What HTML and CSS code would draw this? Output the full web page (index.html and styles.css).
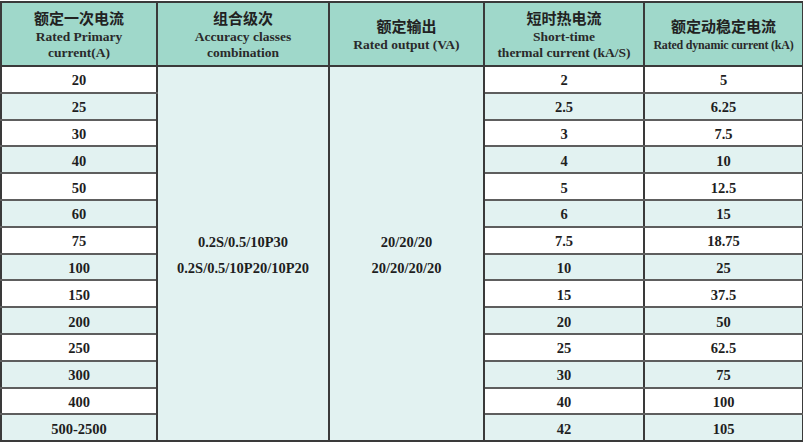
FILE: index.html
```html
<!DOCTYPE html>
<html>
<head>
<meta charset="utf-8">
<link rel="stylesheet" href="styles.css">
</head>
<body>
<table class="spec">
  <colgroup>
    <col class="c1"><col class="c2"><col class="c3"><col class="c4"><col class="c5">
  </colgroup>
  <thead>
    <tr>
      <th><div class="zh">额定一次电流</div><div class="en">Rated Primary<br>current(A)</div></th>
      <th><div class="zh">组合级次</div><div class="en">Accuracy classes<br>combination</div></th>
      <th><div class="zh">额定输出</div><div class="en">Rated output (VA)</div></th>
      <th><div class="zh">短时热电流</div><div class="en">Short-time<br>thermal current (kA/S)</div></th>
      <th><div class="zh">额定动稳定电流</div><div class="en small">Rated dynamic current (kA)</div></th>
    </tr>
  </thead>
  <tbody>
    <tr class="w"><td>20</td><td rowspan="14" class="merged"><div>0.2S/0.5/10P30</div><div>0.2S/0.5/10P20/10P20</div></td><td rowspan="14" class="merged"><div>20/20/20</div><div>20/20/20/20</div></td><td>2</td><td>5</td></tr>
    <tr class="g"><td>25</td><td>2.5</td><td>6.25</td></tr>
    <tr class="w"><td>30</td><td>3</td><td>7.5</td></tr>
    <tr class="g"><td>40</td><td>4</td><td>10</td></tr>
    <tr class="w"><td>50</td><td>5</td><td>12.5</td></tr>
    <tr class="g"><td>60</td><td>6</td><td>15</td></tr>
    <tr class="w"><td>75</td><td>7.5</td><td>18.75</td></tr>
    <tr class="g"><td>100</td><td>10</td><td>25</td></tr>
    <tr class="w"><td>150</td><td>15</td><td>37.5</td></tr>
    <tr class="g"><td>200</td><td>20</td><td>50</td></tr>
    <tr class="w"><td>250</td><td>25</td><td>62.5</td></tr>
    <tr class="g"><td>300</td><td>30</td><td>75</td></tr>
    <tr class="w"><td>400</td><td>40</td><td>100</td></tr>
    <tr class="g"><td>500-2500</td><td>42</td><td>105</td></tr>
  </tbody>
</table>
</body>
</html>
```
FILE: styles.css
```css
html, body {
  margin: 0;
  padding: 0;
  background: #ffffff;
}
.spec {
  border-collapse: collapse;
  table-layout: fixed;
  width: 802px;
  margin-top: 1px;
  font-family: "Liberation Serif", "Times New Roman", serif;
  color: #1e1e1e;
  border: 2px solid #3a3a3a;
}
.c1 { width: 156px; }
.c2 { width: 172px; }
.c3 { width: 155px; }
.c4 { width: 160px; }
.c5 { width: 159px; }
.spec th {
  background: #9fd8ca;
  height: 62px;
  padding: 0;
  border: 2px solid #3a3a3a;
  text-align: center;
  vertical-align: middle;
  font-weight: bold;
}
.zh {
  font-family: "Noto Sans CJK SC", sans-serif;
  font-size: 15px;
  font-weight: bold;
  line-height: 20px;
  color: #222;
  margin-top: 1px;
}
.en {
  font-size: 13.5px;
  line-height: 16px;
  font-weight: bold;
  color: #2a2a2a;
  margin-top: 1px;
}
.en.small {
  font-size: 12px;
  letter-spacing: -0.2px;
}
.spec td {
  height: 22.8px;
  padding: 2px 0 0;
  text-align: center;
  vertical-align: middle;
  font-size: 14.5px;
  line-height: 16px;
  font-weight: bold;
  border-left: 2px solid #3a3a3a;
  border-right: 2px solid #3a3a3a;
  border-top: 2px solid #5e5e5e;
  border-bottom: 2px solid #5e5e5e;
}
.w td { background: #ffffff; }
.g td { background: #e2f2f1; }
.spec td.merged {
  background: #e2f2f1;
  line-height: 26px;
  border-bottom: 2px solid #3a3a3a;
}
.spec tbody tr:last-child td {
  border-bottom: 2px solid #3a3a3a;
}
```
